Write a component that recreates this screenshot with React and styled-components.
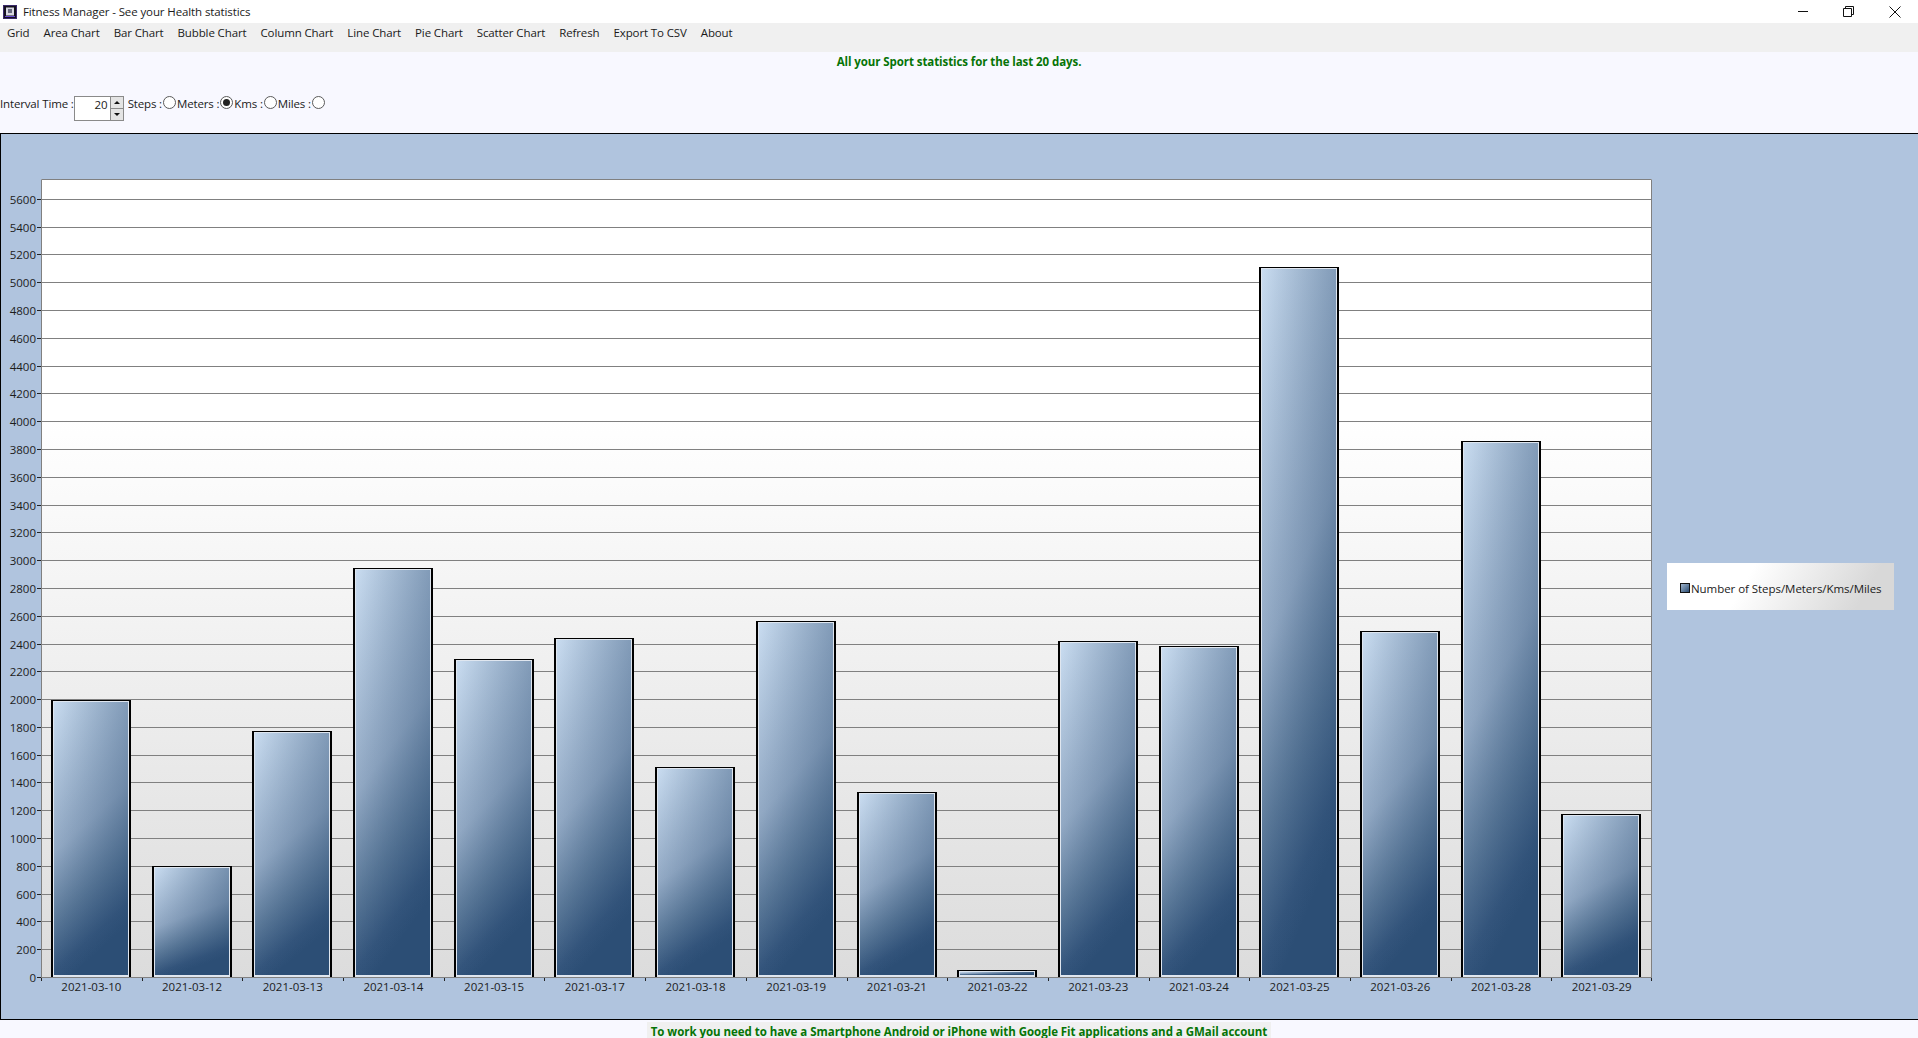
import React from 'react';
import styled, { createGlobalStyle } from 'styled-components';

const FONT = '"Open Sans", "Noto Sans", sans-serif';

const GlobalStyle = createGlobalStyle`
  html, body {
    margin: 0;
    padding: 0;
    height: 100%;
    overflow: hidden;
    background: #f8f8ff;
  }
  body {
    font-family: ${FONT};
    font-size: 11.5px;
    color: #1a1a1a;
  }
`;

const Window = styled.div`
  width: 1918px;
  height: 1038px;
  display: flex;
  flex-direction: column;
  overflow: hidden;
`;

const TitleBar = styled.div`
  height: 23px;
  flex: none;
  display: flex;
  align-items: center;
  background: #fff;
  padding-left: 3px;
`;

const TitleText = styled.span`
  margin-left: 6px;
  font-size: 11.5px;
  letter-spacing: -0.11px;
`;

const WindowControls = styled.div`
  margin-left: auto;
  display: flex;
  align-items: center;
  gap: 35px;
  padding-right: 17px;
`;

const MenuBar = styled.nav`
  height: 29px;
  flex: none;
  display: flex;
  align-items: flex-start;
  background: #f0f0f0;
`;

const MenuItem = styled.span`
  padding: 2px 7px;
  line-height: 16px;
  letter-spacing: -0.12px;
`;

const Headline = styled.div`
  height: 18px;
  padding-top: 1px;
  flex: none;
  line-height: 18px;
  text-align: center;
  font-weight: 700;
  color: #067406;
  letter-spacing: -0.08px;
`;

const Controls = styled.div`
  height: 62px;
  flex: none;
  box-sizing: border-box;
  padding-top: 25px;
  display: flex;
  align-items: flex-start;
`;

const FieldLabel = styled.span`
  line-height: 16px;
  letter-spacing: -0.15px;
  margin-left: ${(p) => p.$gap || 0}px;
`;

const NumberBox = styled.div`
  width: 36px;
  height: 25px;
  box-sizing: border-box;
  border: 1px solid #8a8a8a;
  border-right: none;
  background: #fff;
  text-align: right;
  padding-right: 2px;
  line-height: 16px;
`;

const Spinner = styled.div`
  width: 14px;
  height: 25px;
  box-sizing: border-box;
  display: flex;
  flex-direction: column;
  gap: 1px;
  background: #8a8a8a;
  padding: 1px;
`;

const SpinButton = styled.div`
  flex: 1;
  background: #e4e4e4;
  display: flex;
  align-items: center;
  justify-content: center;
  &::before {
    content: '';
    border-left: 3px solid transparent;
    border-right: 3px solid transparent;
    ${(p) => (p.$down ? 'border-top: 3px solid #111;' : 'border-bottom: 3px solid #111;')}
  }
`;

const Radio = styled.span`
  width: 13px;
  height: 13px;
  margin: 0 1px;
  box-sizing: border-box;
  border: 1px solid #5a5a5a;
  border-radius: 50%;
  background: #fff;
  display: flex;
  align-items: center;
  justify-content: center;
  &::after {
    content: '';
    display: ${(p) => (p.$checked ? 'block' : 'none')};
    width: 7px;
    height: 7px;
    border-radius: 50%;
    background: #222;
  }
`;

const ChartPanel = styled.section`
  height: 887px;
  flex: none;
  box-sizing: border-box;
  border: 1px solid #000;
  border-width: 1px 0 1px 1px;
  background: #b0c4de;
  display: flex;
  align-items: flex-start;
`;

const ChartSvg = styled.svg`
  display: block;
  flex: none;
  text {
    font-family: ${FONT};
    font-size: 11.5px;
    fill: #1c1c1c;
  }
`;

const Legend = styled.div`
  width: 227px;
  height: 47px;
  margin: 429px 0 0 6px;
  box-sizing: border-box;
  padding: 3px 0 0 13px;
  display: flex;
  align-items: center;
  gap: 1px;
  background: linear-gradient(120deg, #fff 35%, #d8d8d8 85%);
  letter-spacing: -0.05px;
`;

const LegendSwatch = styled.span`
  width: 8px;
  height: 8px;
  border: 1px solid #111;
  background: linear-gradient(135deg, #9fb4cc, #2c4e75);
`;

const Footer = styled.div`
  align-self: center;
  margin-top: 2px;
  padding: 0 4px;
  line-height: 20px;
  font-weight: 700;
  color: #067406;
  background: #f0f0f0;
  letter-spacing: -0.04px;
`;

const MENU = ['Grid', 'Area Chart', 'Bar Chart', 'Bubble Chart', 'Column Chart', 'Line Chart', 'Pie Chart', 'Scatter Chart', 'Refresh', 'Export To CSV', 'About'];

// tops measured in the picture, turned back into values
const DATA = [
  ['2021-03-10', 1990], ['2021-03-12', 800], ['2021-03-13', 1770], ['2021-03-14', 2940],
  ['2021-03-15', 2285], ['2021-03-17', 2440], ['2021-03-18', 1510], ['2021-03-19', 2560],
  ['2021-03-21', 1335], ['2021-03-22', 50], ['2021-03-23', 2415], ['2021-03-24', 2380],
  ['2021-03-25', 5110], ['2021-03-26', 2490], ['2021-03-28', 3860], ['2021-03-29', 1175],
];

const PLOT = { left: 40, top: 45, right: 1651, bottom: 843 };
const UNIT = 27.79 / 200;
const SLOT = (PLOT.right - PLOT.left) / DATA.length;
const BAR_WIDTH = 80;
const yOf = (v) => PLOT.bottom - v * UNIT;
const TICKS = Array.from({ length: 29 }, (_, i) => i * 200);

// flat bars go almost fully dark towards the right, tall ones about a third
const shadeOf = (h) => 0.35 + 0.55 * Math.exp(-h / 60);

const AppIcon = () => (
  <svg width="14" height="14" viewBox="0 0 14 14">
    <rect x="0.5" y="0.5" width="13" height="13" fill="#14101f" stroke="#3a2a6a" />
    <rect x="3" y="2.5" width="8" height="8" fill="#d8d8e0" />
    <rect x="5" y="4" width="4" height="4" fill="#6a6a80" />
    <rect x="2" y="11" width="10" height="1" fill="#6a4ad0" />
  </svg>
);

const Minimize = () => (
  <svg width="11" height="11" viewBox="0 0 11 11"><path d="M1 5.5h10" stroke="#111" fill="none" /></svg>
);

const Restore = () => (
  <svg width="11" height="11" viewBox="0 0 11 11">
    <path d="M0.5 2.5h8v8h-8z M2.5 2.5v-2h8v8h-2" stroke="#111" fill="none" />
  </svg>
);

const Close = () => (
  <svg width="12" height="12" viewBox="0 0 12 12"><path d="M0.5 0.5l11 11M11.5 0.5l-11 11" stroke="#111" fill="none" /></svg>
);

const Bar = ({ date, value, index }) => {
  const slotLeft = PLOT.left + index * SLOT;
  const x = Math.round(slotLeft + 10);
  const y = Math.round(yOf(value));
  const h = PLOT.bottom - y;
  const tick = Math.round(slotLeft) + 0.5;
  const fill = { x: x + 3, y: y + 2, width: BAR_WIDTH - 6, height: h - 4 };
  return (
    <g>
      <linearGradient id={`shade${index}`} x1="0" y1="0" x2="1" y2="0">
        <stop offset="0" stopColor="#2c4e75" stopOpacity="0" />
        <stop offset="1" stopColor="#2c4e75" stopOpacity={shadeOf(h)} />
      </linearGradient>
      <rect x={x} y={y} width={BAR_WIDTH} height={h} fill="#000" />
      <rect x={x + 2} y={y + 1} width={BAR_WIDTH - 4} height={h - 1} fill="#dfe6ef" />
      <rect {...fill} fill="url(#barBase)" />
      <rect {...fill} fill={`url(#shade${index})`} />
      <line x1={tick} x2={tick} y1={PLOT.bottom} y2={PLOT.bottom + 4} stroke="#222" />
      <text x={slotLeft + SLOT / 2} y={PLOT.bottom + 14} textAnchor="middle">{date}</text>
    </g>
  );
};

const Chart = () => (
  <ChartSvg width="1660" height="885" viewBox="0 0 1660 885">
    <defs>
      <linearGradient id="plotFill" x1="0" y1="0" x2="0" y2="1">
        <stop offset="0" stopColor="#fff" />
        <stop offset="0.3" stopColor="#fff" />
        <stop offset="1" stopColor="#dcdcdc" />
      </linearGradient>
      <linearGradient id="barBase" x1="0" y1="0" x2="0.25" y2="1">
        <stop offset="0" stopColor="#c9dcf0" />
        <stop offset="0.52" stopColor="#92a9c4" />
        <stop offset="0.76" stopColor="#5a7898" />
        <stop offset="0.93" stopColor="#34557c" />
        <stop offset="1" stopColor="#2c4e75" />
      </linearGradient>
    </defs>
    <rect x={PLOT.left} y={PLOT.top} width={PLOT.right - PLOT.left} height={PLOT.bottom - PLOT.top} fill="url(#plotFill)" />
    {TICKS.map((v) => {
      const y = Math.round(yOf(v)) + 0.5;
      return (
        <g key={v}>
          <line x1={PLOT.left} x2={PLOT.right} y1={y} y2={y} stroke="#808080" />
          <line x1={PLOT.left - 4} x2={PLOT.left} y1={y} y2={y} stroke="#222" />
          <text x={PLOT.left - 5} y={y + 4} textAnchor="end">{v}</text>
        </g>
      );
    })}
    <path
      d={`M${PLOT.left + 0.5} ${PLOT.bottom}V${PLOT.top + 0.5}H${PLOT.right - 0.5}V${PLOT.bottom}`}
      stroke="#808080"
      fill="none"
    />
    {DATA.map(([date, value], i) => <Bar key={date} date={date} value={value} index={i} />)}
    <line x1={PLOT.right - 0.5} x2={PLOT.right - 0.5} y1={PLOT.bottom} y2={PLOT.bottom + 4} stroke="#222" />
    <line x1={PLOT.left} x2={PLOT.right} y1={PLOT.bottom + 0.5} y2={PLOT.bottom + 0.5} stroke="#808080" />
  </ChartSvg>
);

const App = () => (
  <Window>
    <GlobalStyle />
    <TitleBar>
      <AppIcon />
      <TitleText>Fitness Manager - See your Health statistics</TitleText>
      <WindowControls>
        <Minimize />
        <Restore />
        <Close />
      </WindowControls>
    </TitleBar>
    <MenuBar>
      {MENU.map((item) => <MenuItem key={item}>{item}</MenuItem>)}
    </MenuBar>
    <Headline>All your Sport statistics for the last 20 days.</Headline>
    <Controls>
      <FieldLabel>Interval Time :</FieldLabel>
      <NumberBox>20</NumberBox>
      <Spinner>
        <SpinButton />
        <SpinButton $down />
      </Spinner>
      <FieldLabel $gap={4}>Steps :</FieldLabel>
      <Radio />
      <FieldLabel>Meters :</FieldLabel>
      <Radio $checked />
      <FieldLabel>Kms :</FieldLabel>
      <Radio />
      <FieldLabel>Miles :</FieldLabel>
      <Radio />
    </Controls>
    <ChartPanel>
      <Chart />
      <Legend>
        <LegendSwatch />
        Number of Steps/Meters/Kms/Miles
      </Legend>
    </ChartPanel>
    <Footer>To work you need to have a Smartphone Android or iPhone with Google Fit applications and a GMail account</Footer>
  </Window>
);

export default App;
